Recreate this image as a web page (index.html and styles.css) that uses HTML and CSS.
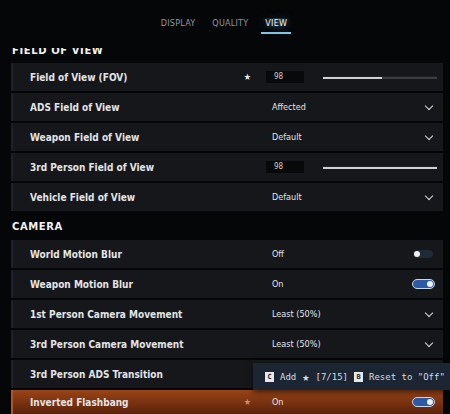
FILE: index.html
```html
<!DOCTYPE html>
<html lang="en">
<head>
    <meta charset="UTF-8">
    <title>Settings - View</title>
    <link rel="stylesheet" href="styles.css">
</head>
<body>

    <div class="tabs">
        <span class="tab">DISPLAY</span>
        <span class="tab">QUALITY</span>
        <span class="tab active">VIEW</span>
    </div>

    <div class="list">
        <h2 class="section first">FIELD OF VIEW</h2>

        <div class="row">
            <span class="label">Field of View (FOV)</span>
            <span class="fav">&#9733;</span>
            <span class="number">98</span>
            <div class="slider"><div class="fill" style="width: 52%"></div></div>
        </div>
        <div class="row">
            <span class="label">ADS Field of View</span>
            <span class="fav"></span>
            <span class="value">Affected</span>
            <span class="chev"></span>
        </div>
        <div class="row">
            <span class="label">Weapon Field of View</span>
            <span class="fav"></span>
            <span class="value">Default</span>
            <span class="chev"></span>
        </div>
        <div class="row">
            <span class="label">3rd Person Field of View</span>
            <span class="fav"></span>
            <span class="number">98</span>
            <div class="slider"><div class="fill" style="width: 100%"></div></div>
        </div>
        <div class="row">
            <span class="label">Vehicle Field of View</span>
            <span class="fav"></span>
            <span class="value">Default</span>
            <span class="chev"></span>
        </div>

        <h2 class="section">CAMERA</h2>

        <div class="row">
            <span class="label">World Motion Blur</span>
            <span class="fav"></span>
            <span class="value">Off</span>
            <span class="toggle"></span>
        </div>
        <div class="row">
            <span class="label">Weapon Motion Blur</span>
            <span class="fav"></span>
            <span class="value">On</span>
            <span class="toggle on"></span>
        </div>
        <div class="row">
            <span class="label">1st Person Camera Movement</span>
            <span class="fav"></span>
            <span class="value">Least (50%)</span>
            <span class="chev"></span>
        </div>
        <div class="row">
            <span class="label">3rd Person Camera Movement</span>
            <span class="fav"></span>
            <span class="value">Least (50%)</span>
            <span class="chev"></span>
        </div>
        <div class="row">
            <span class="label">3rd Person ADS Transition</span>
            <span class="fav"></span>
            <span class="value"></span>
        </div>
        <div class="row selected">
            <span class="label">Inverted Flashbang</span>
            <span class="fav dim">&#9733;</span>
            <span class="value">On</span>
            <span class="toggle on"></span>
        </div>
    </div>

    <div class="hint">
        <span class="key">C</span><span>Add</span><span class="hint-star">&#9733;</span><span>[7/15]</span>
        <span class="key">B</span><span>Reset to "Off"</span>
    </div>

</body>
</html>
```

FILE: styles.css
```css
body {
    margin: 0;
    width: 450px;
    height: 414px;
    overflow: hidden;
    background: #050607;
    font-family: "DejaVu Sans", sans-serif;
    color: #d8dadc;
    position: relative;
}
.tabs {
    height: 48px;
    display: flex;
    justify-content: center;
    gap: 17px;
    padding-left: 2px;
    box-sizing: border-box;
    padding-top: 18px;
}
.tab {
    font-size: 9px;
    font-stretch: condensed;
    color: #8d97a3;
    letter-spacing: 0.2px;
    height: 14px;
}
.tab.active {
    color: #eef4f8;
    border-bottom: 2px solid #7cc8e4;
    padding: 0 4px;
    margin-left: -4px;
    text-shadow: 0 0 8px rgba(120, 190, 230, 0.6);
    background: radial-gradient(ellipse at 50% 0%, rgba(80, 150, 200, 0.25), transparent 70%);
}
.list {
    height: 366px;
    overflow: hidden;
    padding: 0 7px 0 11px;
}
.section {
    margin: 0;
    height: 27px;
    line-height: 27px;
    font-size: 10px;
    font-weight: bold;
    letter-spacing: 0.6px;
    color: #f2f2f2;
    padding-left: 1px;
}
.section.first {
    height: 15px;
    line-height: 5px;
}
.row {
    height: 28px;
    margin-bottom: 2px;
    background: #15171a;
    border-left: 2px solid #1d2024;
    display: flex;
    align-items: center;
    font-size: 10px;
    font-stretch: condensed;
}
.label {
    width: 206px;
    padding-left: 17px;
    color: #e2e4e6;
    font-weight: bold;
}
.fav {
    width: 23px;
    text-align: center;
    color: #e8e8e8;
    font-size: 9px;
}
.fav.dim {
    color: #c99070;
}
.value {
    flex: 1;
    padding-left: 13px;
    color: #e4e5e6;
    font-size: 9px;
}
.number {
    margin-left: 7px;
    width: 38px;
    height: 12px;
    line-height: 12px;
    background: #08090a;
    font-size: 8px;
    color: #d0d0d0;
    padding-left: 8px;
    box-sizing: border-box;
}
.slider {
    margin-left: 19px;
    width: 114px;
    height: 2px;
    background: #3a3d42;
    border-top: 1px solid #1e2023;
}
.fill {
    height: 2px;
    background: #cfd2d5;
}
.chev {
    width: 5px;
    height: 5px;
    border-right: 1.5px solid #dcdcdc;
    border-bottom: 1.5px solid #dcdcdc;
    transform: rotate(45deg);
    margin-right: 11px;
    margin-top: -3px;
}
.toggle {
    width: 20px;
    height: 8px;
    border-radius: 5px;
    background: #1f2a38;
    position: relative;
    margin-right: 10px;
}
.toggle::after {
    content: "";
    position: absolute;
    left: 1px;
    top: 1px;
    width: 6px;
    height: 6px;
    border-radius: 50%;
    background: #f0f0f0;
}
.toggle.on {
    width: 21px;
    height: 8px;
    background: #2d5aa6;
    border: 1.5px solid #c8d6ea;
    margin-right: 8px;
}
.toggle.on::after {
    left: auto;
    right: 1px;
}
.row.selected {
    background: linear-gradient(to bottom, #9a4416 0%, #6e2c0e 60%, #4a1d0a 100%);
    border-left: 2px solid #b0552a;
    align-items: flex-start;
    padding-top: 7px;
    box-sizing: border-box;
}
.hint {
    position: absolute;
    left: 253px;
    top: 363px;
    width: 197px;
    height: 27px;
    background: #1c2632;
    box-shadow: 0 2px 6px rgba(0, 0, 0, 0.6);
    font-family: "DejaVu Sans Mono", monospace;
    font-size: 9px;
    color: #d6dbe0;
    display: flex;
    align-items: center;
    padding-left: 12px;
    box-sizing: border-box;
    gap: 6px;
    white-space: nowrap;
}
.key {
    display: inline-block;
    width: 9px;
    height: 10px;
    line-height: 10px;
    text-align: center;
    background: #e6e8ea;
    color: #1c2632;
    font-weight: bold;
    font-size: 7px;
}
.hint-star {
    font-size: 12px;
    color: #d8dde2;
}
```
